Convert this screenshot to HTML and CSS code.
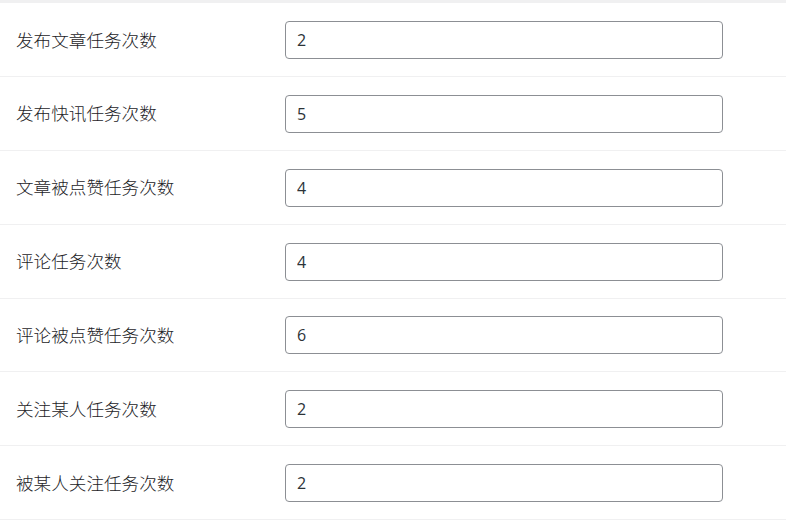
FILE: index.html
```html
<!DOCTYPE html>
<html lang="zh-CN">
<head>
    <meta charset="UTF-8">
    <meta name="viewport" content="width=device-width, initial-scale=1">
    <title>任务次数设置</title>
    <link rel="stylesheet" href="styles.css">
</head>
<body>
    <div class="form-table">
        <div class="form-row">
            <label class="form-label" for="post_num">发布文章任务次数</label>
            <input class="form-input" id="post_num" type="text" value="2">
        </div>
        <div class="form-row">
            <label class="form-label" for="flash_num">发布快讯任务次数</label>
            <input class="form-input" id="flash_num" type="text" value="5">
        </div>
        <div class="form-row">
            <label class="form-label" for="post_like_num">文章被点赞任务次数</label>
            <input class="form-input" id="post_like_num" type="text" value="4">
        </div>
        <div class="form-row">
            <label class="form-label" for="comment_num">评论任务次数</label>
            <input class="form-input" id="comment_num" type="text" value="4">
        </div>
        <div class="form-row">
            <label class="form-label" for="comment_like_num">评论被点赞任务次数</label>
            <input class="form-input" id="comment_like_num" type="text" value="6">
        </div>
        <div class="form-row">
            <label class="form-label" for="follow_num">关注某人任务次数</label>
            <input class="form-input" id="follow_num" type="text" value="2">
        </div>
        <div class="form-row">
            <label class="form-label" for="followed_num">被某人关注任务次数</label>
            <input class="form-input" id="followed_num" type="text" value="2">
        </div>
    </div>
</body>
</html>
```

FILE: styles.css
```css
body {
    margin: 0;
    background-color: #fff;
    color: #1d2327;
    font-family: "Noto Sans CJK SC", "Noto Sans", sans-serif;
}

.form-table {
    border-top: 3px solid #f0f0f1;
}

.form-row {
    display: flex;
    align-items: center;
    padding: 17.9px 0 17px;
    border-bottom: 1px solid #f0f0f1;
}

.form-label {
    flex: 0 0 285px;
    padding-left: 16px;
    box-sizing: border-box;
    font-size: 17.6px;
    font-weight: 300;
    line-height: 1.4;
}

.form-input {
    width: 438px;
    height: 38px;
    box-sizing: border-box;
    margin: 0;
    padding: 0 11px;
    border: 1px solid #8c8f94;
    border-radius: 4px;
    background-color: #fff;
    color: #2c3338;
    font-family: "Open Sans", "Noto Sans", sans-serif;
    font-size: 16px;
    outline: none;
}
```
